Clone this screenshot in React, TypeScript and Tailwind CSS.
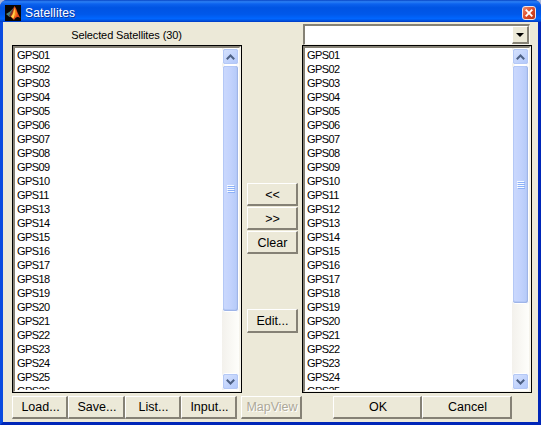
import React from "react";

const ids = Array.from({ length: 26 }, (_, i) => "GPS" + String(i + 1).padStart(2, "0"));
const selected = ids.filter((n) => n !== "GPS12");
const available = ids.slice(0, 25);

function Button({ label, className = "", disabled = false }: { label: string; className?: string; disabled?: boolean }) {
  return (
    <button
      className={`shrink-0 flex items-center justify-center border-t border-l border-r-2 border-b-2 border-t-white border-l-white border-r-[#858175] border-b-[#858175] bg-[#ece9d8] pl-[2px] text-[12.5px] leading-none whitespace-nowrap ${
        disabled ? "text-[#aca899] [text-shadow:1px_1px_0_#fff]" : "text-black"
      } ${className}`}
    >
      {label}
    </button>
  );
}

function ScrollArrow({ down = false }: { down?: boolean }) {
  return (
    <div className="flex h-[17px] w-[17px] shrink-0 items-center justify-center rounded-[3px] border border-white bg-[#b5c7f0]">
      <div className="flex h-[15px] w-[15px] items-center justify-center rounded-[2px] border border-[#b4c8f6] bg-linear-to-br from-[#d5e1fd] to-[#b3c9fb]">
        <svg width="9" height="6" viewBox="0 0 9 6" fill="none" stroke="#4d6185" strokeWidth="2">
          <path d={down ? "M.8 .8L4.5 4.5L8.2 .8" : "M.8 5.2L4.5 1.5L8.2 5.2"} />
        </svg>
      </div>
    </div>
  );
}

function List({ items, thumb }: { items: string[]; thumb: string }) {
  return (
    <div className="flex h-[348px] w-[230px] shrink-0 border border-black bg-white">
      <div className="flex h-[346px] w-[228px] border-t-2 border-l-2 border-r-2 border-b border-t-[#858175] border-l-[#858175] border-r-[#f5f3eb] border-b-[#f5f3eb]">
        <ul className="ml-[2px] h-[342px] flex-1 overflow-hidden text-[11px] leading-[14px] tracking-[-0.6px] text-black">
          {items.map((n) => (
            <li key={n} className="h-[14px]">{n}</li>
          ))}
        </ul>
        <div className="flex h-[342px] w-[17px] flex-col bg-linear-to-r from-[#f3f1ec] to-[#fefefb]">
          <ScrollArrow />
          <div className={`flex w-[17px] items-center justify-center rounded-[3px] border border-white bg-[#9fb5e8] pr-px pb-px ${thumb}`}>
            <div className="flex h-full w-full items-center justify-center rounded-[2px] border border-[#b4c8f6] bg-linear-to-r from-[#cad8fd] via-[#c3d3fd] to-[#b8ccf9]">
              <div className="flex flex-col gap-px">
                {[0, 1, 2, 3].map((i) => (
                  <div key={i} className="h-px w-[7px] bg-[#f6faff] shadow-[1px_1px_0_#8cb0f8]" />
                ))}
              </div>
            </div>
          </div>
          <div className="flex-1" />
          <ScrollArrow down />
        </div>
      </div>
    </div>
  );
}

export default function App() {
  return (
    <div className="h-[425px] w-[541px] overflow-hidden bg-[#a9b8dc] font-['Liberation_Sans',Arial,sans-serif]">
      <div className="flex h-[425px] flex-col overflow-hidden rounded-t-[7px] bg-[#0831d9]">
        <header className="flex h-[22px] shrink-0 items-center bg-[linear-gradient(180deg,#0844c4_0%,#2b80f5_8%,#0c62ee_18%,#0054e3_35%,#0058ea_65%,#0066ff_85%,#0050dc_94%,#0037c3_100%)] pt-[3px] pr-[4px] pl-[5px]">
          <svg width="16" height="16" viewBox="0 0 16 16" className="shrink-0">
            <rect width="16" height="16" fill="#080604" />
            <path d="M1 9L5 6.5L9 2.5L7 9L4.5 12Z" fill="#4a7f7c" />
            <path d="M6 7L9.5 1L8.5 8L6 12L4 11Z" fill="#7a3528" />
            <path d="M9.5 1C12 4 12.5 9 15.5 13C12.5 11 11 12 9 15L5.5 11.5C8 9.5 8 5 9.5 1Z" fill="#e0461a" />
            <path d="M9.6 2.5L10.4 9L8.3 13.8L6 11.5C8.4 9.5 8.6 6 9.6 2.5Z" fill="#ffd04a" />
            <path d="M10 3L12 8L11.4 10.5L9.5 13Z" fill="#f57c1c" />
          </svg>
          <h1 className="ml-[4px] flex-1 text-[12px] leading-[16px] tracking-[0.15px] text-white [text-shadow:1px_1px_0_#10389c]">Satellites</h1>
          <button className="mr-px flex h-[14px] w-[14px] items-center justify-center rounded-[3px] border border-[#f0e4e4] bg-linear-to-br from-[#ee8a68] via-[#dc4b27] to-[#b93416]">
            <svg width="8" height="8" viewBox="0 0 8 8" stroke="#fff" strokeWidth="1.9">
              <path d="M.7 .7L7.3 7.3M7.3 .7L.7 7.3" />
            </svg>
          </button>
        </header>
        <main className="flex h-[403px] flex-col border-x-[3px] border-b-[3px] border-r-[#0026b8] border-b-[#0026b8] border-l-[#0a4be0] bg-[#ece9d8] pl-[9px]">
          <div className="flex h-[23px] shrink-0 pt-[2px]">
            <div className="w-[229px] pt-[4px] text-center text-[11px] leading-[14px] tracking-[-0.1px] whitespace-nowrap text-black">Selected Satellites (30)</div>
            <div className="ml-[62px] flex h-[21px] w-[227px] border-t-2 border-l-2 border-r border-b border-t-[#858175] border-l-[#858175] border-r-[#f8f6ee] border-b-[#f8f6ee] bg-white">
              <div className="flex-1" />
              <div className="flex h-[18px] w-[17px] items-center justify-center border-t border-l border-r-2 border-b-2 border-t-white border-l-white border-r-[#858175] border-b-[#858175] bg-[#ece9d8]">
                <svg width="8" height="4" viewBox="0 0 8 4"><path d="M0 0H8L4 4Z" /></svg>
              </div>
            </div>
          </div>
          <div className="flex h-[348px]">
            <List items={selected} thumb="h-[247px]" />
            <div className="flex w-[60px] shrink-0 flex-col items-center pt-[138px]">
              <Button label="<<" className="h-[23px] w-[51px] pt-[2px]" />
              <Button label=">>" className="mt-px h-[23px] w-[51px] pt-[2px]" />
              <Button label="Clear" className="mt-px h-[23px] w-[51px] pt-[2px]" />
              <Button label="Edit..." className="mt-[55px] h-[24px] w-[51px] pt-[2px]" />
            </div>
            <List items={available} thumb="h-[239px]" />
          </div>
          <div className="mt-[3px] flex h-[23px]">
            <Button label="Load..." className="h-[23px] w-[56px]" />
            <Button label="Save..." className="h-[23px] w-[57px]" />
            <Button label="List..." className="h-[23px] w-[56px]" />
            <Button label="Input..." className="h-[23px] w-[56px]" />
            <Button label="MapView" disabled className="ml-[4px] h-[23px] w-[61px]" />
            <Button label="OK" className="ml-[31px] h-[23px] w-[89px]" />
            <Button label="Cancel" className="h-[23px] w-[90px]" />
          </div>
        </main>
      </div>
    </div>
  );
}
